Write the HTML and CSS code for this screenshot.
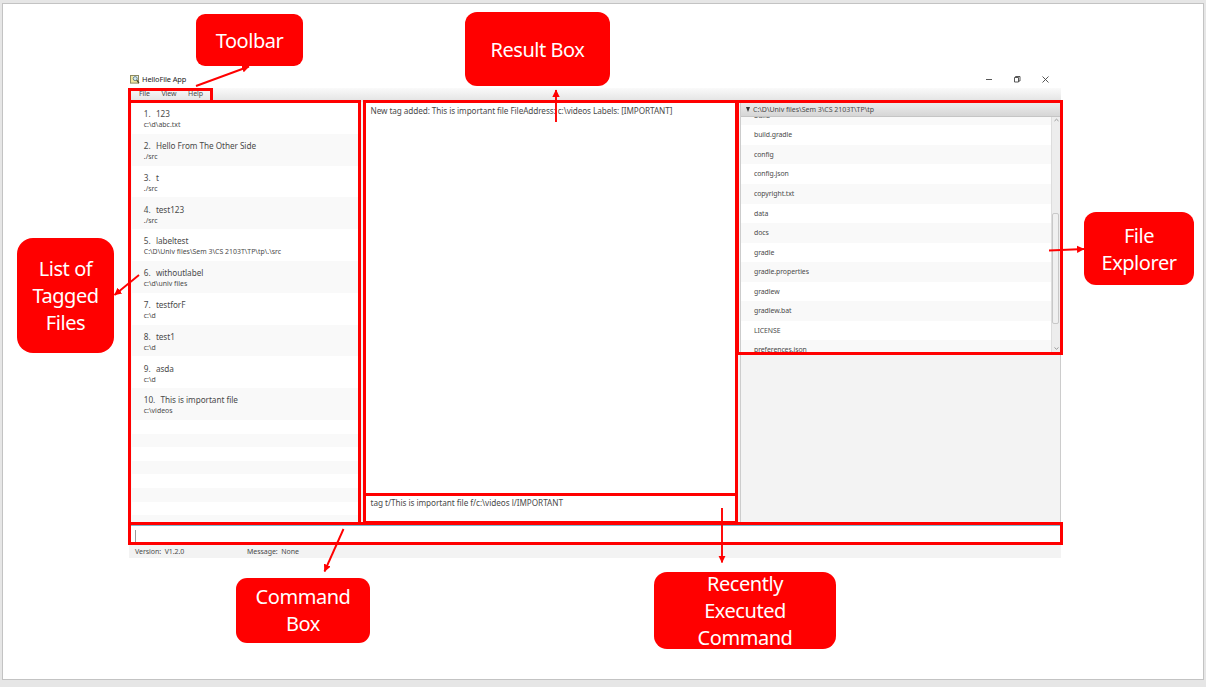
FILE: index.html
```
<!DOCTYPE html>
<html lang="en">
<head>
<meta charset="utf-8">
<title>HelloFile App</title>
<link rel="stylesheet" href="styles.css">
</head>
<body>
<div class="slide">
  <main class="app">
    <header class="titlebar">
      <svg class="logo" width="10" height="9" viewBox="0 0 10 9"><rect x=".5" y=".5" width="8" height="7.6" fill="#f1e6a0" stroke="#8c8a62"/><rect x="3" y="1" width="5" height="4" fill="#e8f4f7"/><circle cx="5.2" cy="3.6" r="2" fill="#d5edf2" stroke="#5c7478" stroke-width=".9"/><path d="M6.7 5.2 9 8" stroke="#4d4b2c" stroke-width="1.2"/></svg>
      <span class="apptitle">HelloFile App</span>
      <svg class="controls" width="66" height="9" viewBox="0 0 66 9" fill="none" stroke="#444" stroke-width=".9"><path d="M1 4.500h6"/><path d="M29.500 2.500h4v4.500h-4zM30.500 2V1.500h4.500v4.500H34"/><path d="M57.500 1.500l6 6M63.500 1.500l-6 6"/></svg>
    </header>
    <nav class="menubar"><span>File</span><span>View</span><span>Help</span></nav>
    <div class="content">
      <section class="tags">
        <div class="tag"><b>1.</b><span>123</span><p>c:\d\abc.txt</p></div>
        <div class="tag"><b>2.</b><span>Hello From The Other Side</span><p>./src</p></div>
        <div class="tag"><b>3.</b><span>t</span><p>./src</p></div>
        <div class="tag"><b>4.</b><span>test123</span><p>./src</p></div>
        <div class="tag"><b>5.</b><span>labeltest</span><p>C:\D\Univ files\Sem 3\CS 2103T\TP\tp\.\src</p></div>
        <div class="tag"><b>6.</b><span>withoutlabel</span><p>c:\d\univ files</p></div>
        <div class="tag"><b>7.</b><span>testforF</span><p>c:\d</p></div>
        <div class="tag"><b>8.</b><span>test1</span><p>c:\d</p></div>
        <div class="tag"><b>9.</b><span>asda</span><p>c:\d</p></div>
        <div class="tag"><b>10.</b><span>This is important file</span><p>c:\videos</p></div>
        <div class="blank"></div><div class="blank"></div><div class="blank"></div><div class="blank"></div><div class="blank"></div><div class="blank"></div><div class="blank"></div><div class="blank"></div>
      </section>
      <section class="results">
        <div class="result">New tag added: This is important file FileAddress: c:\videos Labels: [IMPORTANT]</div>
        <div class="recent">tag t/This is important file f/c:\videos l/IMPORTANT</div>
      </section>
      <aside class="explorer">
        <div class="path"><i></i><span>C:\D\Univ files\Sem 3\CS 2103T\TP\tp</span></div>
        <div class="tree">
          <div class="files">
            <div>build</div><div>build.gradle</div><div>config</div><div>config.json</div><div>copyright.txt</div><div>data</div><div>docs</div><div>gradle</div><div>gradle.properties</div><div>gradlew</div><div>gradlew.bat</div><div>LICENSE</div><div>preferences.json</div>
          </div>
          <div class="scroll">
            <svg width="9" height="6" viewBox="0 0 9 6"><path d="M2.500 4l2-1.800 2 1.800" fill="none" stroke="#999"/></svg>
            <div class="thumb"></div>
            <svg width="9" height="6" viewBox="0 0 9 6"><path d="M2.500 1.500l2 1.800 2-1.800" fill="none" stroke="#999"/></svg>
          </div>
        </div>
      </aside>
    </div>
    <div class="command"><span class="caret"></span></div>
    <footer class="status"><span class="version">Version:&nbsp; V1.2.0</span><span class="message">Message:&nbsp; None</span></footer>
  </main>

  <div class="frame f-toolbar"></div>
  <div class="frame f-list"></div>
  <div class="frame f-result"></div>
  <div class="frame f-recent"></div>
  <div class="frame f-explorer"></div>
  <div class="frame f-command"></div>

  <div class="callout c-toolbar"><span>Toolbar</span></div>
  <div class="callout c-result"><span>Result Box</span></div>
  <div class="callout c-list"><span>List of<br>Tagged<br>Files</span></div>
  <div class="callout c-explorer"><span>File<br>Explorer</span></div>
  <div class="callout c-command"><span>Command<br>Box</span></div>
  <div class="callout c-recent"><span>Recently<br>Executed<br>Command</span></div>

  <svg class="arrows" width="1206" height="687" viewBox="0 0 1206 687">
    <defs><marker id="head" markerUnits="userSpaceOnUse" markerWidth="8" markerHeight="8" refX="7" refY="4" orient="auto"><path d="M0 .3 7.500 4 0 7.700z" fill="#f00"/></marker></defs>
    <g stroke="#f00" stroke-width="1.900">
      <path d="M196 86 249 66.500" marker-end="url(#head)"/>
      <path d="M556 122V90" marker-end="url(#head)"/>
      <path d="M139 275 114.500 295" marker-end="url(#head)"/>
      <path d="M1049 250.500 1084 249" marker-end="url(#head)"/>
      <path d="M343.500 529 324.500 571.500" marker-end="url(#head)"/>
      <path d="M722 508V562.500" marker-end="url(#head)"/>
    </g>
  </svg>
</div>
</body>
</html>
```
FILE: styles.css
```
* { box-sizing: border-box; }
body { margin: 0; width: 1206px; height: 687px; padding: 3px 2px; overflow: hidden; background: #e6e6e6; font-family: "Noto Sans", "Open Sans", sans-serif; color: #4a4a4a; }
.slide { width: 1202px; height: 677px; border: 1px solid #c3c3c3; background: #fff; padding: 67px 0 0 126px; }
.app { width: 932px; height: 487px; display: flex; flex-direction: column; background: #f3f3f3; }
.titlebar { height: 17px; background: #fff; display: flex; align-items: center; padding: 0 10.500px 0 1px; }
.apptitle { margin-left: 2px; padding-bottom: 1px; font-size: 7.4px; color: #222; letter-spacing: -.1px; }
.controls { margin-left: auto; }
.menubar { height: 14px; display: flex; gap: 11.700px; padding: 1px 0 0 10px; font-size: 7px; line-height: 10px; letter-spacing: -.1px; background: linear-gradient(#fafafa, #e2e2e2); }
.content { height: 421px; display: flex; }
.tags { width: 230px; padding-left: 3px; overflow: hidden; background: #f9f9f9; }
.tag { height: 31.8px; padding: 6.2px 0 0 11.800px; background: #fff; white-space: nowrap; font-size: 8.2px; line-height: 12px; letter-spacing: -.05px; }
.tag:nth-child(even), .blank:nth-child(even) { background: #f9f9f9; }
.tag b { font-weight: 400; margin-right: 5.300px; }
.tag p { margin: 0; font-size: 6.9px; line-height: 10.500px; letter-spacing: .02px; }
.blank { height: 13.6px; background: #fff; }
.results { width: 374px; margin-left: 5px; display: flex; flex-direction: column; background: #fff; font-size: 8.2px; line-height: 12px; white-space: nowrap; }
.result { height: 392px; padding: 3px 0 0 6.500px; letter-spacing: -.085px; }
.recent { padding: 3px 0 0 6.500px; letter-spacing: -.05px; }
.explorer { flex: 1; margin-left: 2px; border: solid #ccc; border-width: 0 1px 1px 1px; }
.path { height: 15px; display: flex; align-items: center; gap: 3px; padding-left: 5px; font-size: 7px; letter-spacing: -.03px; background: linear-gradient(#eee, #d6d6d6); border-bottom: 1px solid #c5c5c5; }
.path i { border: 2.500px solid transparent; border-top: 5px solid #333; border-bottom: 0; }
.tree { height: 235px; display: flex; overflow: hidden; background: #fff; }
.files { flex: 1; margin-top: -11.200px; font-size: 6.9px; letter-spacing: -.07px; line-height: 19.55px; }
.files div { height: 19.55px; padding-left: 13px; }
.files div:nth-child(odd) { background: #f9f9f9; }
.scroll { width: 9px; display: flex; flex-direction: column; justify-content: space-between; background: #ededed; border-left: 1px solid #ddd; }
.thumb { height: 111px; margin: 67px 1px 0 0; border: 1px solid #c8c8c8; border-radius: 2px; background: #f0f0f0; }
.command { height: 21px; padding: 4px 5px; background: #fff; border-top: 3px solid #7fb6cc; }
.caret { display: block; width: 1px; height: 12px; margin-left: 1px; background: #999; }
.status { height: 14px; padding-left: 6px; display: flex; align-items: center; font-size: 7px; letter-spacing: -.05px; }
.version { width: 112px; }
.frame { position: absolute; border: 3px solid #f00; }
.f-toolbar { left: 128px; top: 88px; width: 85px; height: 15px; }
.f-list { left: 128px; top: 100px; width: 233px; height: 425px; }
.f-result { left: 363px; top: 100px; width: 375px; height: 396px; }
.f-recent { left: 363px; top: 493px; width: 375px; height: 31px; }
.f-explorer { left: 736px; top: 100px; width: 327px; height: 255px; }
.f-command { left: 128px; top: 522px; width: 935px; height: 23px; }
.callout { position: absolute; display: flex; align-items: center; justify-content: center; text-align: center; background: #f00; color: #fff; font-size: 20px; line-height: 27px; letter-spacing: -.45px; }
.c-toolbar { left: 196px; top: 14px; width: 107px; height: 52px; border-radius: 9px; }
.c-result { left: 465px; top: 12px; width: 145px; height: 74px; border-radius: 12px; }
.c-list { left: 17px; top: 238px; width: 97px; height: 115px; border-radius: 16px; }
.c-explorer { left: 1084px; top: 212px; width: 110px; height: 73px; border-radius: 12px; }
.c-command { left: 236px; top: 578px; width: 134px; height: 65px; padding-bottom: 2px; border-radius: 11px; }
.c-recent { left: 654px; top: 572px; width: 182px; height: 77px; border-radius: 13px; }
.arrows { position: absolute; left: 0; top: 0; }
```
